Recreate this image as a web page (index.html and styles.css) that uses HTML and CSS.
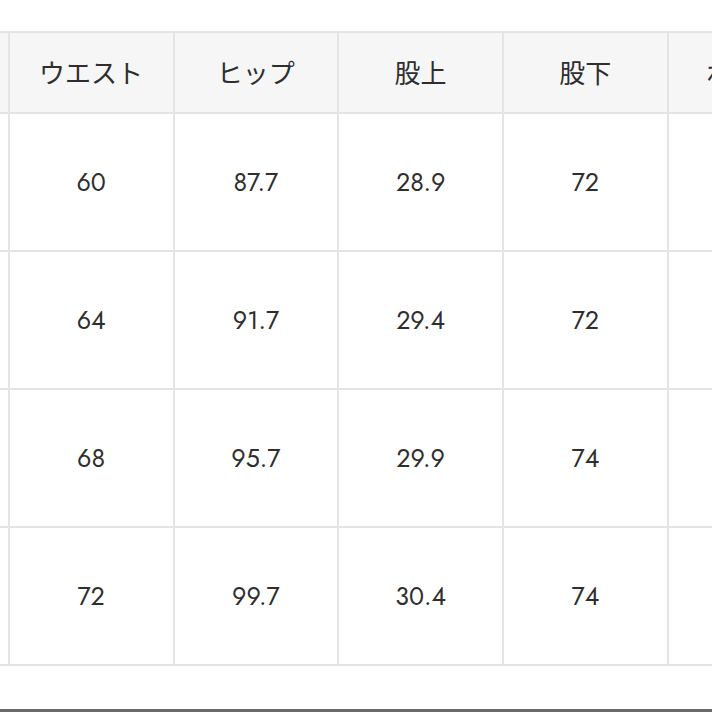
FILE: index.html
```html
<!DOCTYPE html>
<html lang="ja">
<head>
<meta charset="utf-8">
<link rel="stylesheet" href="styles.css">
</head>
<body>
<div class="page">
  <div class="scroller">
    <table class="size-table">
      <thead>
        <tr>
          <th>サイズ</th><th>ウエスト</th><th>ヒップ</th><th>股上</th><th>股下</th><th class="wide">わたり</th>
        </tr>
      </thead>
      <tbody>
        <tr><td>S</td><td>60</td><td>87.7</td><td>28.9</td><td>72</td><td>27.5</td></tr>
        <tr><td>M</td><td>64</td><td>91.7</td><td>29.4</td><td>72</td><td>28.5</td></tr>
        <tr><td>L</td><td>68</td><td>95.7</td><td>29.9</td><td>74</td><td>29.5</td></tr>
        <tr><td>XL</td><td>72</td><td>99.7</td><td>30.4</td><td>74</td><td>30.5</td></tr>
      </tbody>
    </table>
  </div>
  <div class="bottom-rule"></div>
</div>
</body>
</html>
```

FILE: styles.css
```css
html, body {
  margin: 0;
  padding: 0;
  background: #ffffff;
}

.page {
  width: 712px;
  height: 712px;
  overflow: hidden;
  display: flex;
  flex-direction: column;
}

.scroller {
  overflow: hidden;
  padding-top: 31px;
  height: 678px;
  box-sizing: border-box;
}

.size-table {
  border-collapse: collapse;
  table-layout: fixed;
  margin-left: -157px;
  width: 988.5px;
  font-family: "Noto Sans CJK JP", "Noto Sans", sans-serif;
  color: #2e2e2e;
}

.size-table th,
.size-table td {
  width: 162.75px;
  border: 2px solid #e4e4e4;
  text-align: center;
  vertical-align: middle;
  padding: 0;
  white-space: nowrap;
}

.size-table th {
  background: #f6f6f6;
  font-weight: 400;
  font-size: 26px;
  height: 76px;
  padding-bottom: 3px;
}

.size-table th.wide {
  letter-spacing: 3px;
}

.size-table td {
  font-family: "Jost", "Noto Sans", "Open Sans", sans-serif;
  font-size: 25px;
  height: 136px;
}

.bottom-rule {
  margin-top: auto;
  height: 3px;
  background: #6a6a6a;
}
```
